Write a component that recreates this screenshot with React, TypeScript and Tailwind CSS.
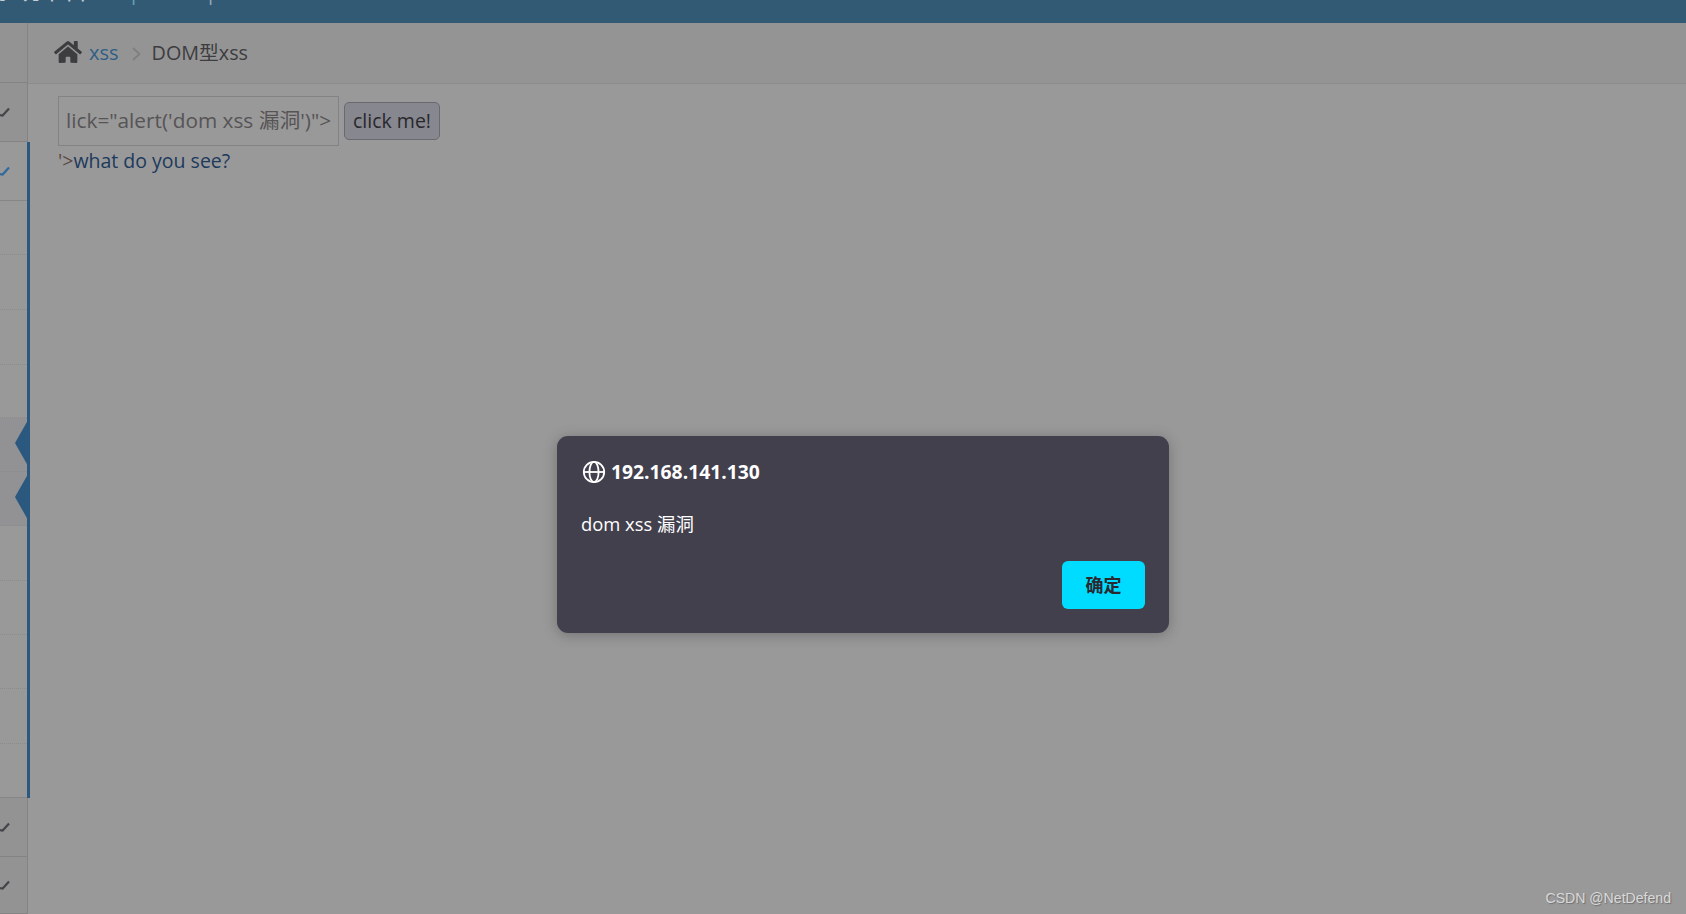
import React from "react";
import { FaHome } from "react-icons/fa";

const cjk = { fontFamily: '"Open Sans","Noto Sans CJK SC",sans-serif' };

function Check({ blue }: { blue?: boolean }) {
  return (
    <svg width="10" height="10" viewBox="0 0 10 10" className="shrink-0">
      <path d="M0 8.2 L2.6 8.6 L9 1.6" fill="none" stroke={blue ? "#2f6a9a" : "#45454a"} strokeWidth="2.2" />
    </svg>
  );
}

function Row({ h, kind }: { h: number; kind: string }) {
  const hClass: Record<number, string> = { 59: "h-[59px]", 58: "h-[58px]", 54: "h-[54px]", 55: "h-[55px]", 53: "h-[53px]", 57: "h-[57px]" };
  if (kind === "check")
    return (
      <div className={`${hClass[h]} w-[28px] flex items-center bg-[#939394] border-r border-b border-[#848485]`}>
        <Check />
      </div>
    );
  if (kind === "blue")
    return (
      <div className={`${hClass[h]} w-[30px] flex items-center border-r-[3px] border-[#2b587f]`}>
        <div className="h-full w-[27px] flex items-center border-b border-[#868687]">
          <Check blue />
        </div>
      </div>
    );
  if (kind === "on")
    return (
      <div className={`${hClass[h]} w-[30px] border-r-[3px] border-[#2b587f] relative`}>
        <div className="h-full w-[27px] bg-[#929295] border-b border-dotted border-[#8a8a8c]" />
        <svg width="13" height="46" viewBox="0 0 13 46" className="absolute left-[15px] top-[2px]">
          <polygon points="0,23 13,0 13,46" fill="#2b587f" />
        </svg>
      </div>
    );
  return (
    <div className={`${hClass[h]} w-[30px] border-r-[3px] border-[#2b587f]`}>
      <div className="h-full w-[27px] border-b border-dotted border-[#8c8c8d]" />
    </div>
  );
}

export default function App() {
  return (
    <div className="relative h-[914px] w-[1686px] overflow-hidden bg-[#99999a] flex flex-col" style={cjk}>
      <header className="h-[23px] shrink-0 bg-[#325a75] overflow-hidden flex items-start text-[#c9ced2] text-[24px] leading-[24px]">
        <div className="-mt-[22px] -ml-[8px] flex items-start">
          <span className="w-[135px] whitespace-nowrap">系统平台</span>
          <span className="w-[77px] text-[#5fa0b4]">|</span>
          <span className="text-[#8fa5b2]">|</span>
        </div>
      </header>

      <div className="flex flex-1 min-h-0">
        <aside className="w-[28px] shrink-0 flex flex-col relative z-10 overflow-visible">
          <div className="h-[60px] w-[28px] shrink-0 bg-[#939394] border-r border-b border-[#848485]" />
          <Row h={59} kind="check" />
          <Row h={59} kind="blue" />
          <Row h={54} kind="off" />
          <Row h={55} kind="off" />
          <Row h={55} kind="off" />
          <Row h={53} kind="off" />
          <Row h={54} kind="on" />
          <Row h={54} kind="on" />
          <Row h={55} kind="off" />
          <Row h={54} kind="off" />
          <Row h={54} kind="off" />
          <Row h={55} kind="off" />
          <div className="h-[54px] w-[30px] border-r-[3px] border-[#2b587f]">
            <div className="h-full w-[27px] border-b border-[#868687]" />
          </div>
          <Row h={59} kind="check" />
          <Row h={57} kind="check" />
        </aside>

        <main className="flex-1 min-w-0 flex flex-col">
          <nav className="h-[61px] shrink-0 bg-[#949495] border-b border-[#8c8c8d] flex items-center pl-[26px] text-[20px] text-[#3d3c3e]">
            <FaHome className="text-[#3d3c3e] text-[28px] -mt-[2px]" />
            <span className="ml-[7px] text-[#2f5f86]">xss</span>
            <svg width="9" height="14" viewBox="0 0 9 14" className="ml-[13px] mt-[2px]">
              <path d="M1 1 L7.5 7 L1 13" fill="none" stroke="#7f7f82" strokeWidth="1.8" />
            </svg>
            <span className="ml-[11px] text-[19.8px]">DOM型xss</span>
          </nav>
          <div className="pl-[30px] pt-[12px] flex flex-col items-start">
            <div className="flex items-center gap-[5px]">
              <div className="h-[50px] w-[281px] border border-[#838385] flex items-center pl-[7px] text-[20.8px] text-[#565455] overflow-hidden whitespace-nowrap">
                lick="alert('dom xss 漏洞')"&gt;
              </div>
              <button className="h-[38px] w-[96px] rounded-[5px] border border-[#69696e] bg-[#87878f] text-[19.5px] text-[#29282c]">
                click me!
              </button>
            </div>
            <a className="text-[19.5px] leading-[27px] mt-[1px] text-[#1d3a5c]">
              <span className="text-[#5a4a45]">'&gt;</span>what do you see?
            </a>
          </div>
        </main>
      </div>

      <div className="absolute left-[557px] top-[436px] z-20 h-[197px] w-[612px] rounded-[11px] bg-[#43404e] shadow-[0_2px_14px_rgba(0,0,0,0.25)] px-[24px] pt-[23px] text-white flex flex-col">
        <div className="flex items-center gap-[6px] text-[19.3px] font-bold leading-[26px]">
          <svg width="24" height="24" viewBox="0 0 24 24" fill="none" stroke="#fff" strokeWidth="1.8" className="ml-[1px] -mr-[1px]">
            <circle cx="12" cy="12" r="10.2" />
            <ellipse cx="12" cy="12" rx="4.6" ry="10.2" />
            <path d="M2 12 H22" />
          </svg>
          <span>192.168.141.130</span>
        </div>
        <p className="mt-[26px] text-[18.4px] leading-[26px]">dom xss 漏洞</p>
        <div className="flex justify-end mt-[24px]">
          <button className="h-[48px] w-[83px] rounded-[6px] bg-[#00dcff] text-[18px] font-bold text-[#2a2830]">确定</button>
        </div>
      </div>

      <span className="absolute right-[15px] bottom-[7px] z-20 text-[14.1px] leading-[18px] text-[#d9d9d9] [text-shadow:1px_1px_1px_#707070]" style={{ fontFamily: '"Liberation Sans",sans-serif' }}>
        CSDN @NetDefend
      </span>
    </div>
  );
}
